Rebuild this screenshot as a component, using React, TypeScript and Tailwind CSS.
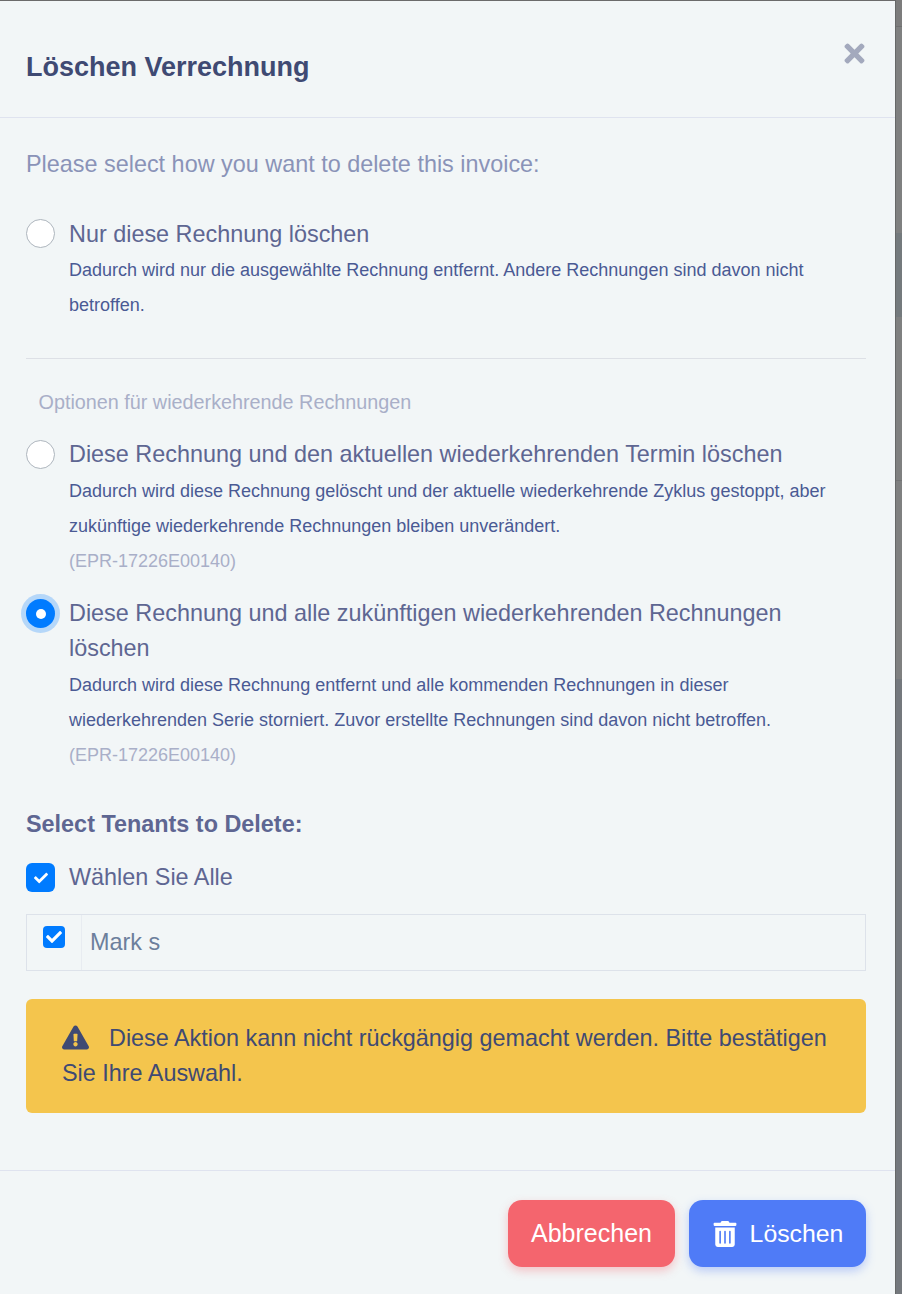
import { FaTimes, FaTrashAlt, FaExclamationTriangle, FaCheck } from 'react-icons/fa';

function Radio({ checked }: { checked?: boolean }) {
  if (checked) {
    return (
      <span className="flex h-[29px] w-[29px] shrink-0 items-center justify-center rounded-full bg-[#007bff] shadow-[0_0_0_5px_rgba(0,123,255,0.25)]">
        <span className="h-[10px] w-[10px] rounded-full bg-white" />
      </span>
    );
  }
  return <span className="h-[29px] w-[29px] shrink-0 rounded-full border border-[#adb5bd] bg-white" />;
}

function Option({ title, desc, code, checked, className }: { title: string; desc: string; code?: string; checked?: boolean; className?: string }) {
  return (
    <div className={`flex gap-[14px] ${className ?? ''}`}>
      <Radio checked={checked} />
      <div className={`${code ? '-mt-[3px]' : '-mt-[2px]'} min-w-0 flex-1`}>
        <div className="text-[23.4px] leading-[35px] text-[#5e6692]">{title}</div>
        <div className={`${code ? 'mt-[2px]' : 'mt-[1px]'} text-[18px] leading-[35px] text-[#4a5a94]`}>{desc}</div>
        {code && <div className="text-[18px] leading-[35px] text-[#a9afc8]">{code}</div>}
      </div>
    </div>
  );
}

export default function App() {
  return (
    <div className="flex h-[1294px] w-[902px] overflow-hidden bg-[#7f8080] font-['Liberation_Sans',Arial,sans-serif]">
      <div className="flex h-full w-[895px] flex-col border-t border-[#6b6b6b] bg-[#f2f6f7]">
        <header className="flex h-[117px] justify-between border-b border-[#dfe3ef] pl-[26px] pr-[26px]">
          <h1 className="mt-[48px] text-[27px] font-bold leading-[36px] text-[#3f4a73]">Löschen Verrechnung</h1>
          <FaTimes className="mt-[38px] text-[#a3a9bd]" size={29} />
        </header>

        <main className="flex-1 pl-[26px] pr-[29px]">
          <p className="mt-[30px] text-[23.4px] leading-[32px] text-[#8a93b8]">Please select how you want to delete this invoice:</p>

          <Option
            className="mt-[39px]"
            title="Nur diese Rechnung löschen"
            desc="Dadurch wird nur die ausgewählte Rechnung entfernt. Andere Rechnungen sind davon nicht betroffen."
          />

          <div className="mt-[35px] border-t border-[#dde0e6]" />
          <div className="ml-[12.5px] mt-[29px] text-[19.8px] leading-[28px] text-[#a9afc8]">Optionen für wiederkehrende Rechnungen</div>

          <Option
            className="mt-[24px]"
            title="Diese Rechnung und den aktuellen wiederkehrenden Termin löschen"
            desc="Dadurch wird diese Rechnung gelöscht und der aktuelle wiederkehrende Zyklus gestoppt, aber zukünftige wiederkehrende Rechnungen bleiben unverändert."
            code="(EPR-17226E00140)"
          />
          <Option
            className="mt-[20px]"
            checked
            title="Diese Rechnung und alle zukünftigen wiederkehrenden Rechnungen löschen"
            desc="Dadurch wird diese Rechnung entfernt und alle kommenden Rechnungen in dieser wiederkehrenden Serie storniert. Zuvor erstellte Rechnungen sind davon nicht betroffen."
            code="(EPR-17226E00140)"
          />

          <div className="mt-[35px] text-[23.4px] font-bold leading-[32px] text-[#5e6692]">Select Tenants to Delete:</div>

          <div className="mt-[23px] flex items-center gap-[14px]">
            <span className="flex h-[29px] w-[29px] items-center justify-center rounded-[6px] bg-[#007bff] text-white">
              <FaCheck size={14} />
            </span>
            <span className="text-[23.4px] leading-[29px] text-[#5e6692]">Wählen Sie Alle</span>
          </div>

          <div className="mt-[22px] flex h-[57px] border border-[#dde2ea]">
            <div className="flex w-[55px] justify-center border-r border-[#e8ecf1] pt-[11px]">
              <span className="flex h-[22px] w-[22px] items-center justify-center rounded-[4px] bg-[#007bff] text-white">
                <FaCheck size={16} />
              </span>
            </div>
            <div className="pl-[8px] text-[23.4px] leading-[55px] text-[#6c7f9c]">Mark s</div>
          </div>

          <div className="mt-[28px] h-[114px] rounded-[6px] bg-[#f4c54d] pl-[36px] pr-[30px] pt-[22px] text-[23.4px] leading-[35px] text-[#3f4a73]">
            <FaExclamationTriangle className="mr-[20px] inline-block align-[-5px]" size={27} />
            Diese Aktion kann nicht rückgängig gemacht werden. Bitte bestätigen Sie Ihre Auswahl.
          </div>
        </main>

        <footer className="flex h-[124px] items-start justify-end gap-[14px] border-t border-[#dfe3ef] pr-[29px] pt-[29px]">
          <button className="h-[67px] w-[167px] rounded-[14px] bg-[#f4656e] text-[25px] text-white shadow-[0_4px_10px_rgba(244,101,110,0.35)]">Abbrechen</button>
          <button className="flex h-[67px] w-[177px] items-center justify-center gap-[12px] rounded-[14px] bg-[#4f7bf7] text-[24.8px] text-white shadow-[0_4px_10px_rgba(79,123,247,0.35)]">
            <FaTrashAlt size={26} />
            Löschen
          </button>
        </footer>
      </div>

      {/* page behind the modal, only a sliver shows */}
      <div className="flex h-full w-[7px] flex-col border-l border-[#666868]">
        <div className="h-[27px] border-b border-[#6f7070] bg-[#7c7c7c]" />
        <div className="h-[206px] bg-[#7f8080]" />
        <div className="h-[84px] bg-[#747a7d]" />
        <div className="h-[164px] border-b border-[#737475] bg-[#7f8080]" />
        <div className="h-[198px] bg-[#7f8080]" />
        <div className="flex-1 bg-[#74787d]" />
      </div>
    </div>
  );
}
